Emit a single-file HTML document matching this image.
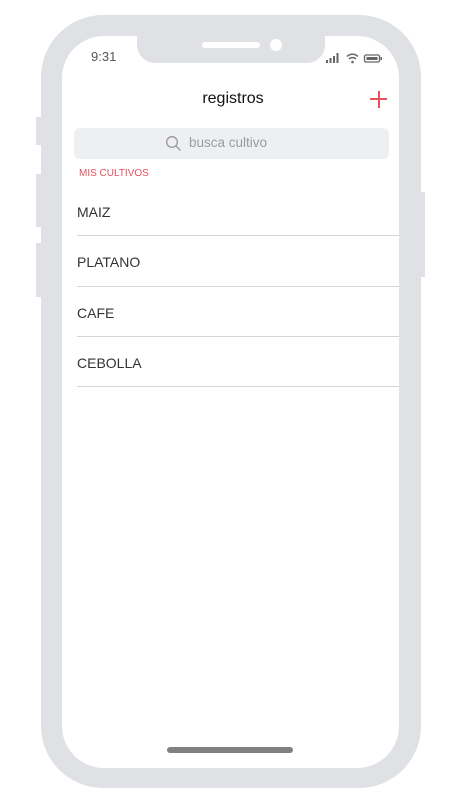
<!DOCTYPE html>
<html><head><meta charset="utf-8"><style>
*{margin:0;padding:0;box-sizing:border-box}
body{width:451px;height:803px;background:#fff;position:relative;overflow:hidden;font-family:"Liberation Sans",sans-serif}
.a{position:absolute}
.frame{left:41px;top:15px;width:380px;height:773px;background:#dfe1e5;border-radius:62px}
.screen{left:62px;top:36px;width:337px;height:732px;background:#fff;border-radius:42px}
.notch{left:137px;top:30px;width:188px;height:33px;background:#dfe1e5;border-radius:0 0 18px 18px}
.btn{background:#dfe1e5}
.item{left:77px;font-size:14px;color:#333}
.line{left:77px;width:322px;height:1px;background:#d6d6d6}
</style></head><body>
<div class="a btn" style="left:36px;top:117px;width:6px;height:28px"></div>
<div class="a btn" style="left:36px;top:174px;width:6px;height:53px"></div>
<div class="a btn" style="left:36px;top:243px;width:6px;height:54px"></div>
<div class="a btn" style="left:419px;top:192px;width:6px;height:85px"></div>
<div class="a frame"></div>
<div class="a screen"></div>
<div class="a notch"></div>
<div class="a" style="left:202px;top:42px;width:58px;height:6px;background:#fff;border-radius:3px"></div>
<div class="a" style="left:270px;top:39px;width:12px;height:12px;background:#fff;border-radius:50%"></div>
<div class="a" style="left:91px;top:49px;font-size:13px;color:#555">9:31</div>
<svg class="a" style="left:326px;top:52px" width="60" height="12" viewBox="0 0 60 12">
<rect x="0" y="8" width="2" height="3" fill="#666"/><rect x="3.5" y="6" width="2" height="5" fill="#666"/><rect x="7" y="4" width="2" height="7" fill="#666"/><rect x="10.5" y="1" width="2" height="10" fill="#666"/>
<path d="M21 4.5a8 8 0 0 1 11 0M23 7a5 5 0 0 1 7 0" stroke="#666" stroke-width="1.5" fill="none"/><circle cx="26.5" cy="10" r="1.3" fill="#666"/>
<rect x="38.5" y="3" width="15" height="7" rx="1.5" stroke="#666" stroke-width="1.3" fill="none"/><rect x="40.5" y="5" width="11" height="3" fill="#666"/><rect x="54.5" y="5" width="1.5" height="3" fill="#666"/>
</svg>
<div class="a" style="left:0;width:466px;top:90px;text-align:center;font-size:16px;color:#111">registros</div>
<div class="a" style="left:370px;top:98px;width:17px;height:2px;background:#e8505b"></div>
<div class="a" style="left:377.5px;top:91px;width:2px;height:17px;background:#e8505b"></div>
<div class="a" style="left:74px;top:128px;width:315px;height:31px;background:#eeeff1;border-radius:6px"></div>
<svg class="a" style="left:165px;top:135px" width="17" height="17"><circle cx="7" cy="7" r="5.3" stroke="#999" stroke-width="1.3" fill="none"/><path d="M11 11l4.5 4.5" stroke="#999" stroke-width="1.3"/></svg>
<div class="a" style="left:189px;top:135px;font-size:13.5px;color:#9a9ca3">busca cultivo</div>
<div class="a" style="left:79px;top:168px;font-size:10px;color:#e8505b">MIS CULTIVOS</div>
<div class="a item" style="top:204px">MAIZ</div><div class="a line" style="top:235px"></div>
<div class="a item" style="top:254px">PLATANO</div><div class="a line" style="top:286px"></div>
<div class="a item" style="top:305px">CAFE</div><div class="a line" style="top:336px"></div>
<div class="a item" style="top:355px">CEBOLLA</div><div class="a line" style="top:386px"></div>
<div class="a" style="left:167px;top:747px;width:126px;height:6px;background:#808080;border-radius:3px"></div>
</body></html>
